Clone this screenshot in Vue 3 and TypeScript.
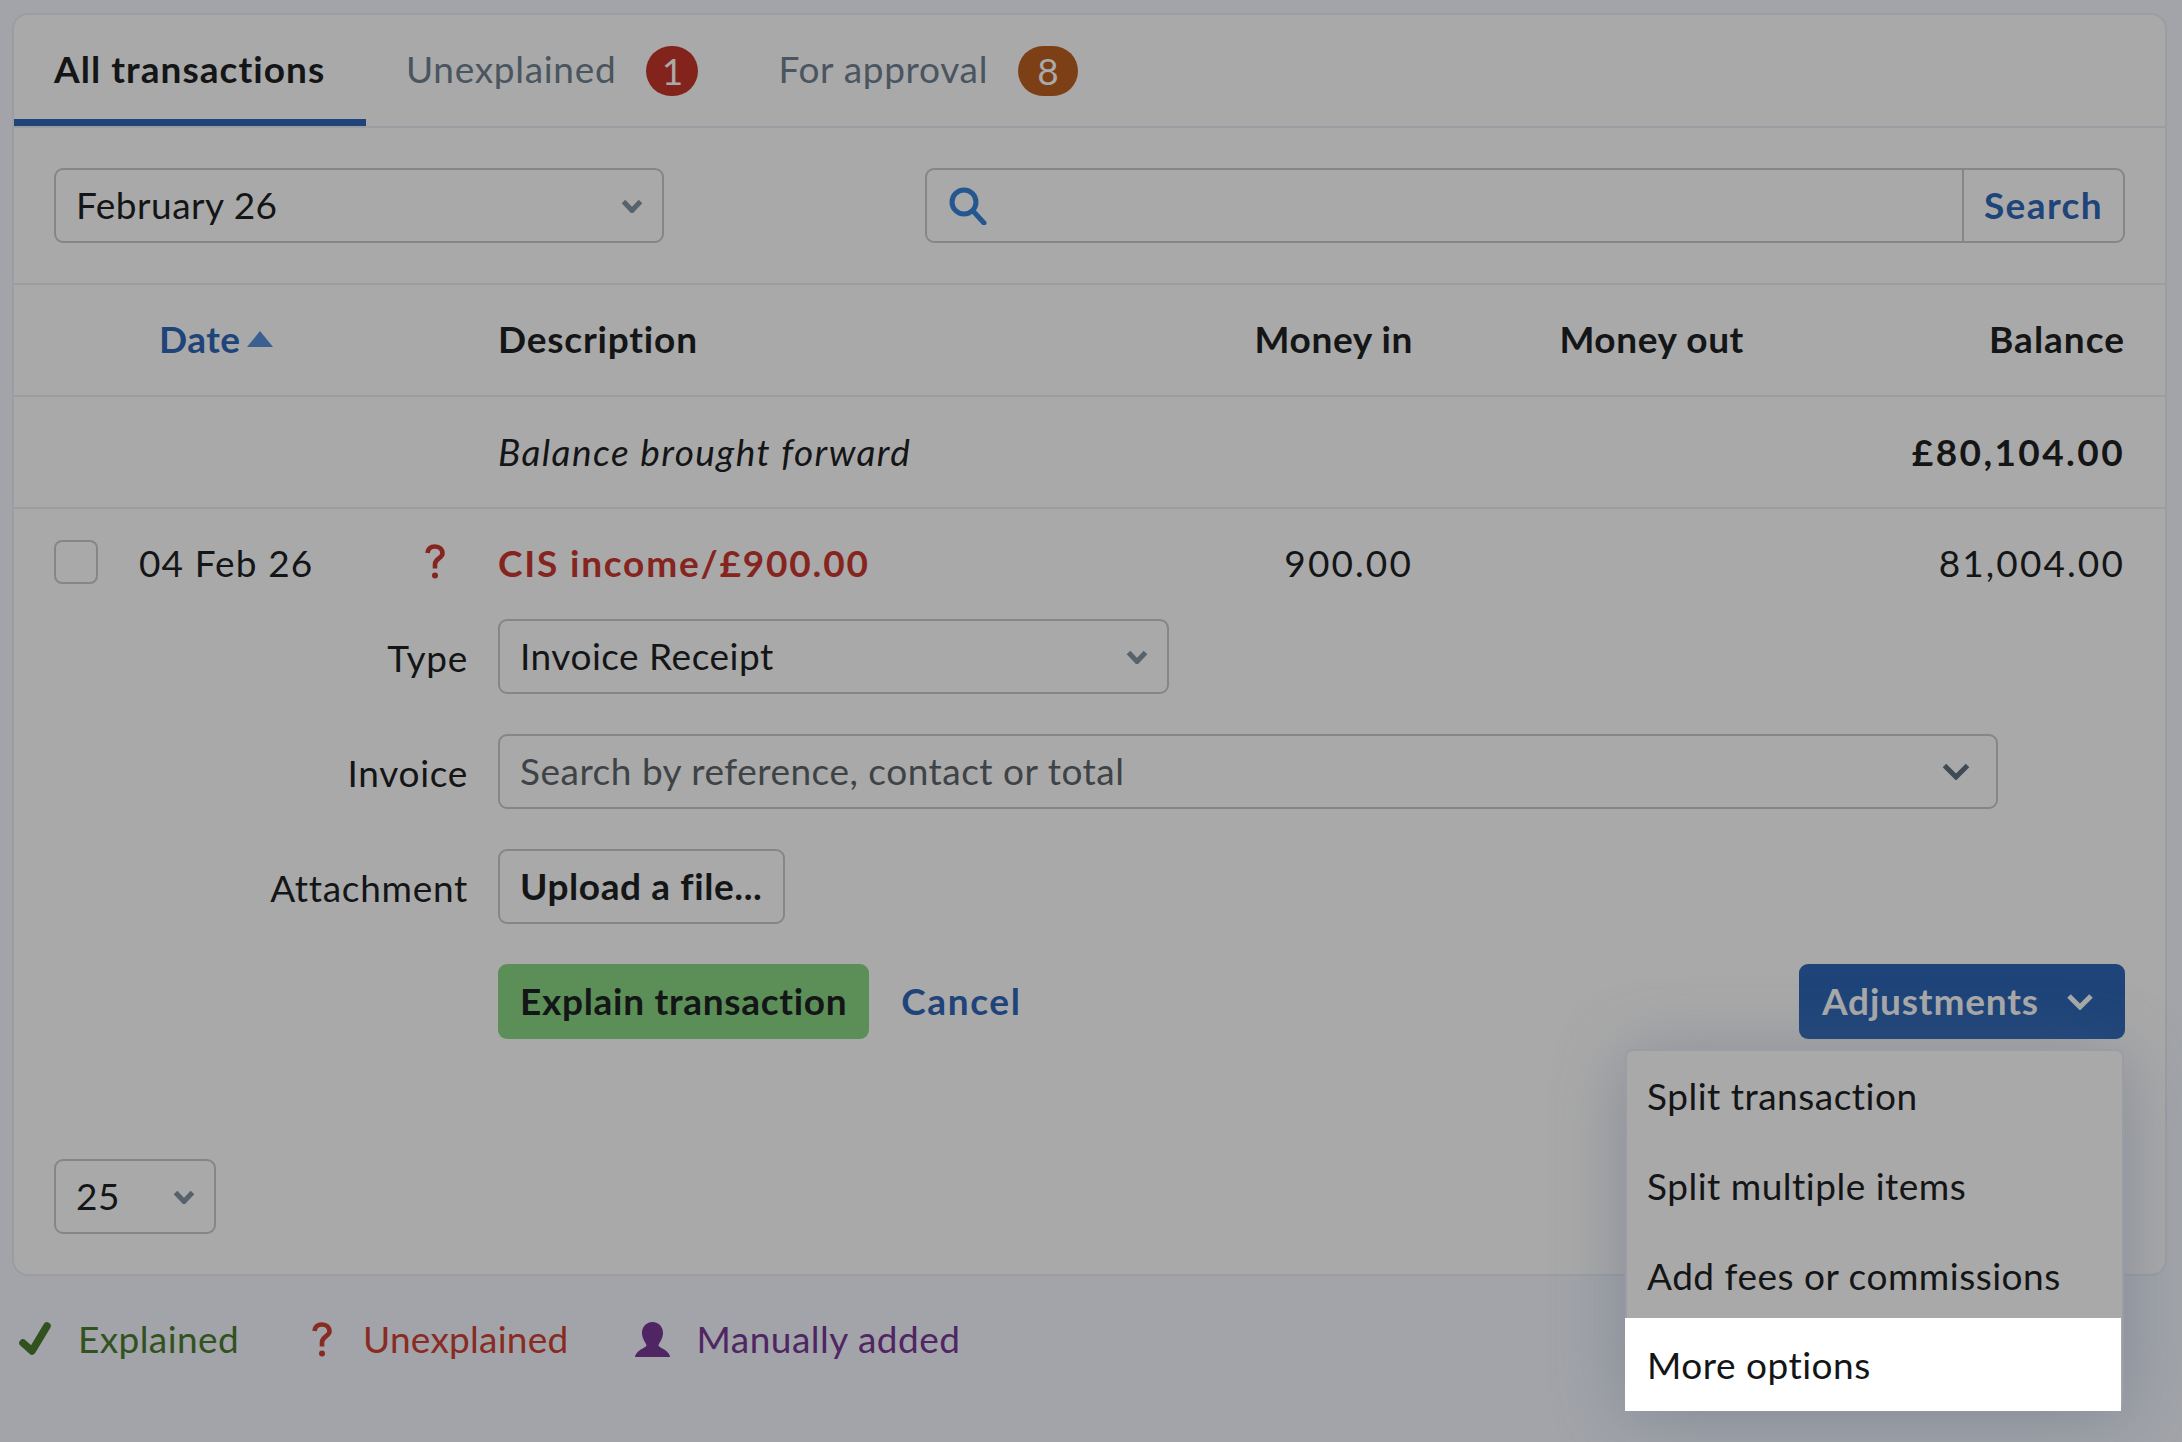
<script setup lang="ts">
const menuItems = ['Split transaction', 'Split multiple items', 'Add fees or commissions', 'More options'];
</script>

<template>
  <div class="page">
    <div class="panel">
      <div class="tabs">
        <div class="tab is-active">All transactions</div>
        <div class="tab">Unexplained <span class="badge badge-red">1</span></div>
        <div class="tab">For approval <span class="badge badge-orange">8</span></div>
      </div>

      <div class="filters">
        <div class="select month">
          <span>February 26</span>
          <svg class="chev" viewBox="0 0 22 14"><path d="M2.5 2.5 11 11.5 19.5 2.5" /></svg>
        </div>
        <div class="search">
          <span class="search-field">
            <svg class="search-icon" viewBox="0 0 38 38"><circle cx="15" cy="15" r="12" /><path d="M24 24 35 36" /></svg>
          </span>
          <span class="search-btn">Search</span>
        </div>
      </div>

      <div class="grid head">
        <div class="date-head">
          <span class="date-label">Date</span>
          <svg class="sort" viewBox="0 0 26 16"><path d="M13 0 26 16H0Z" /></svg>
        </div>
        <div class="head-desc">Description</div>
        <div class="num">Money in</div>
        <div class="num">Money out</div>
        <div class="num head-balance">Balance</div>
      </div>

      <div class="grid forward">
        <div></div>
        <div class="italic">Balance brought forward</div>
        <div></div>
        <div></div>
        <div class="num total">£80,104.00</div>
      </div>

      <div class="txn">
        <div class="grid txn-row">
          <div class="txn-lead">
            <span class="check"></span>
            <span class="txn-date">04 Feb 26</span>
            <svg class="qmark qmark-row" viewBox="0 0 20 35"><path d="M2.5 9C3 4.5 6 2.5 10 2.5 14.5 2.5 17.5 5.5 17.5 9.5 17.5 14 10 15 10 20V24.5" /><circle cx="10" cy="31.5" r="3" /></svg>
          </div>
          <div class="txn-desc">CIS income/£900.00</div>
          <div class="num amount">900.00</div>
          <div></div>
          <div class="num amount">81,004.00</div>
        </div>

        <div class="form">
          <label>Type</label>
          <div class="select type">
            <span>Invoice Receipt</span>
            <svg class="chev" viewBox="0 0 22 14"><path d="M2.5 2.5 11 11.5 19.5 2.5" /></svg>
          </div>

          <label>Invoice</label>
          <div class="select invoice">
            <span class="placeholder">Search by reference, contact or total</span>
            <svg class="chev chev-lg" viewBox="0 0 28 17"><path d="M2.5 2.5 14 14 25.5 2.5" /></svg>
          </div>

          <label>Attachment</label>
          <div class="upload-wrap"><span class="btn-upload">Upload a file...</span></div>

          <span></span>
          <div class="actions">
            <span class="btn-explain">Explain transaction</span>
            <span class="cancel">Cancel</span>
            <span class="btn-adjust">
              Adjustments
              <svg class="chev chev-adjust" viewBox="0 0 28 17"><path d="M3 3 14 14 25 3" /></svg>
            </span>
          </div>
        </div>
      </div>

      <div class="footer">
        <div class="select per-page">
          <span>25</span>
          <svg class="chev" viewBox="0 0 22 14"><path d="M2.5 2.5 11 11.5 19.5 2.5" /></svg>
        </div>
      </div>
    </div>

    <div class="legend">
      <span class="legend-item green">
        <svg class="tick" viewBox="0 0 32 34"><path d="M4 21 13 29 28 4" /></svg>
        Explained
      </span>
      <span class="legend-item red">
        <svg class="qmark qmark-legend" viewBox="0 0 20 35"><path d="M2.5 9C3 4.5 6 2.5 10 2.5 14.5 2.5 17.5 5.5 17.5 9.5 17.5 14 10 15 10 20V24.5" /><circle cx="10" cy="31.5" r="3" /></svg>
        Unexplained
      </span>
      <span class="legend-item purple">
        <svg class="person" viewBox="0 0 35 35"><path d="M17.5 0C24 0 28 5 28 11 28 16 25 20 23.5 23 23.5 25 27 26 30 28 33 30 35 33 35 35H0C0 33 2 30 5 28 8 26 11.5 25 11.5 23 10 20 7 16 7 11 7 5 11 0 17.5 0Z" /></svg>
        Manually added
      </span>
    </div>

    <div class="menu">
      <div v-for="item in menuItems" :key="item" class="menu-item" :class="{ 'is-lit': item === 'More options' }">
        {{ item }}
      </div>
    </div>
  </div>
</template>

<style>
html,
body {
  margin: 0;
  background: #a2a4a9;
}
</style>

<style scoped>
.page {
  position: relative;
  box-sizing: border-box;
  width: 2182px;
  height: 1442px;
  overflow: hidden;
  padding: 13px 15px 0 12px;
  background: #a2a4a9;
  color: #141516;
  font-family: Lato, 'Open Sans', sans-serif;
  font-size: 37px;
  line-height: 44px;
  letter-spacing: 0.5px;
}

.panel {
  box-sizing: border-box;
  height: 1263px;
  border: 2px solid #9c9da2;
  border-radius: 16px;
  background: #a9a9a9;
}

.tabs {
  box-sizing: border-box;
  display: flex;
  height: 113px;
  border-bottom: 2px solid #9c9da2;
}

.tab {
  display: flex;
  align-items: center;
  box-sizing: border-box;
  height: 111px;
  padding: 0 40px 4px;
  color: #4a5560;
  letter-spacing: 0.7px;
}

.tab.is-active {
  width: 352px;
  padding: 3px 0 0 40px;
  border-bottom: 7px solid #1e4479;
  color: #141516;
  font-weight: 700;
  letter-spacing: 1.05px;
}

.badge {
  display: inline-flex;
  align-items: center;
  justify-content: center;
  height: 50px;
  margin: 5px 0 0 30px;
  border-radius: 25px;
  color: #a9a9a9;
  letter-spacing: 0;
}

.badge-red {
  width: 52px;
  background: #82231c;
}

.badge-orange {
  width: 60px;
  background: #7d3f16;
}

.filters {
  box-sizing: border-box;
  display: flex;
  justify-content: space-between;
  height: 157px;
  padding: 40px 40px 40px 40px;
  border-bottom: 2px solid #9c9da2;
}

.select {
  box-sizing: border-box;
  display: flex;
  align-items: center;
  justify-content: space-between;
  height: 75px;
  padding: 0 19px 2px 20px;
  border: 2px solid #848688;
  border-radius: 9px;
}

.month {
  width: 610px;
}

.chev {
  width: 22px;
  height: 14px;
  margin-top: 2px;
  fill: none;
  stroke: #56626c;
  stroke-width: 5;
}

.search {
  box-sizing: border-box;
  display: flex;
  width: 1200px;
  height: 75px;
  border: 2px solid #848688;
  border-radius: 9px;
}

.search-field {
  flex: 1;
  display: flex;
  align-items: center;
  padding-left: 22px;
}

.search-icon {
  width: 38px;
  height: 38px;
  fill: none;
  stroke: #24578f;
  stroke-width: 5;
  stroke-linecap: round;
}

.search-btn {
  display: flex;
  align-items: center;
  justify-content: center;
  width: 159px;
  padding-bottom: 2px;
  border-left: 2px solid #848688;
  color: #1e4479;
  font-weight: 700;
  letter-spacing: 1.4px;
}

.grid {
  display: grid;
  grid-template-columns: 444px 615px 300px 331px 381px;
  padding-left: 40px;
}

.head,
.forward {
  box-sizing: border-box;
  align-items: center;
  height: 112px;
  border-bottom: 2px solid #9c9da2;
}

.head {
  padding-bottom: 2px;
  font-weight: 700;
  letter-spacing: 0.6px;
}

.date-head {
  display: flex;
  align-items: center;
  gap: 6px;
  padding-left: 105px;
  color: #1e4479;
}

.date-label {
  letter-spacing: 0.5px;
}

.sort {
  width: 26px;
  height: 16px;
  fill: #3a5f90;
}

.head-desc {
  letter-spacing: 0.8px;
}

.head-balance {
  letter-spacing: 1px;
}

.num {
  text-align: right;
}

.total {
  font-weight: 700;
  letter-spacing: 2.4px;
}

.italic {
  font-style: italic;
  letter-spacing: 1.45px;
}

.txn {
  padding-top: 29px;
}

.txn-row {
  align-items: center;
  height: 44px;
}

.txn-lead {
  display: flex;
  align-items: center;
}

.check {
  box-sizing: border-box;
  flex: none;
  width: 44px;
  height: 44px;
  border: 2px solid #848688;
  border-radius: 8px;
  background: #a9a9a9;
}

.txn-date {
  width: 286px;
  margin-left: 41px;
  padding-top: 3px;
  letter-spacing: 1.1px;
}

.qmark {
  flex: none;
  width: 20px;
  height: 35px;
  fill: none;
  stroke-width: 4.6;
}

.qmark circle {
  stroke: none;
}

.qmark-row {
  stroke: #862420;
}

.qmark-row circle {
  fill: #862420;
}

.qmark-legend {
  margin-right: 31px;
  stroke: #882b23;
}

.qmark-legend circle {
  fill: #882b23;
}

.txn-desc {
  padding-top: 3px;
  color: #862420;
  font-weight: 700;
  letter-spacing: 1.8px;
}

.amount {
  padding-top: 3px;
  letter-spacing: 2.1px;
}

.form {
  display: grid;
  grid-template-columns: 414px 1fr;
  grid-auto-rows: 75px;
  column-gap: 30px;
  row-gap: 40px;
  align-items: center;
  margin-top: 37px;
  padding: 0 40px;
}

.form label {
  padding-top: 2px;
  text-align: right;
  letter-spacing: 0.7px;
}

.type {
  width: 671px;
}

.invoice {
  width: 1500px;
  padding-right: 26px;
}

.chev-lg {
  width: 28px;
  height: 17px;
  stroke: #3e4a55;
}

.placeholder {
  color: #3e4347;
}

.upload-wrap {
  display: flex;
}

.btn-upload {
  box-sizing: border-box;
  display: flex;
  align-items: center;
  height: 75px;
  padding: 0 21px 2px 20px;
  border: 2px solid #848688;
  border-radius: 9px;
  font-weight: 700;
  letter-spacing: 0.6px;
}

.actions {
  display: flex;
  align-items: center;
}

.btn-explain {
  box-sizing: border-box;
  display: flex;
  align-items: center;
  height: 75px;
  padding: 0 22px 2px;
  border-radius: 9px;
  background: #5b8f57;
  font-weight: 700;
  letter-spacing: 0.7px;
}

.cancel {
  margin-left: 32px;
  padding-bottom: 2px;
  color: #1e4479;
  font-weight: 700;
  letter-spacing: 1.6px;
}

.btn-adjust {
  box-sizing: border-box;
  display: flex;
  align-items: center;
  justify-content: space-between;
  width: 326px;
  height: 75px;
  margin-left: auto;
  padding: 0 31px 2px 23px;
  border-radius: 9px;
  background: #1e4479;
  color: #a9a9a9;
  font-weight: 700;
  letter-spacing: 0.8px;
}

.chev-adjust {
  width: 28px;
  height: 17px;
  stroke: #a9a9a9;
}

.footer {
  padding: 120px 0 0 40px;
}

.per-page {
  width: 162px;
}

.legend {
  display: flex;
  align-items: center;
  margin-top: 41px;
  padding-left: 7px;
}

.legend-item {
  display: flex;
  align-items: center;
}

.green {
  color: #31521f;
  letter-spacing: 0.4px;
}

.red {
  margin-left: 73px;
  color: #882b23;
  letter-spacing: 0.25px;
}

.purple {
  margin-left: 67px;
  color: #4f2663;
}

.tick {
  width: 32px;
  height: 34px;
  margin-right: 27px;
  fill: none;
  stroke: #31521f;
  stroke-width: 7.5;
  stroke-linecap: round;
  stroke-linejoin: round;
}

.person {
  width: 35px;
  height: 35px;
  margin-right: 26px;
  fill: #4f2663;
}

.menu {
  position: absolute;
  left: 1625px;
  top: 1049px;
  box-sizing: border-box;
  width: 499px;
  border: 2px solid #9c9da2;
  border-bottom: 0;
  border-radius: 8px;
  background: #a9a9a9;
  box-shadow: 0 6px 70px rgba(90, 105, 130, 0.45);
}

.menu-item {
  display: flex;
  align-items: center;
  height: 90px;
  padding-left: 20px;
}

.menu-item.is-lit {
  height: 93px;
  margin: -3px 1px 0 -2px;
  padding-left: 22px;
  background: #fff;
}
</style>
